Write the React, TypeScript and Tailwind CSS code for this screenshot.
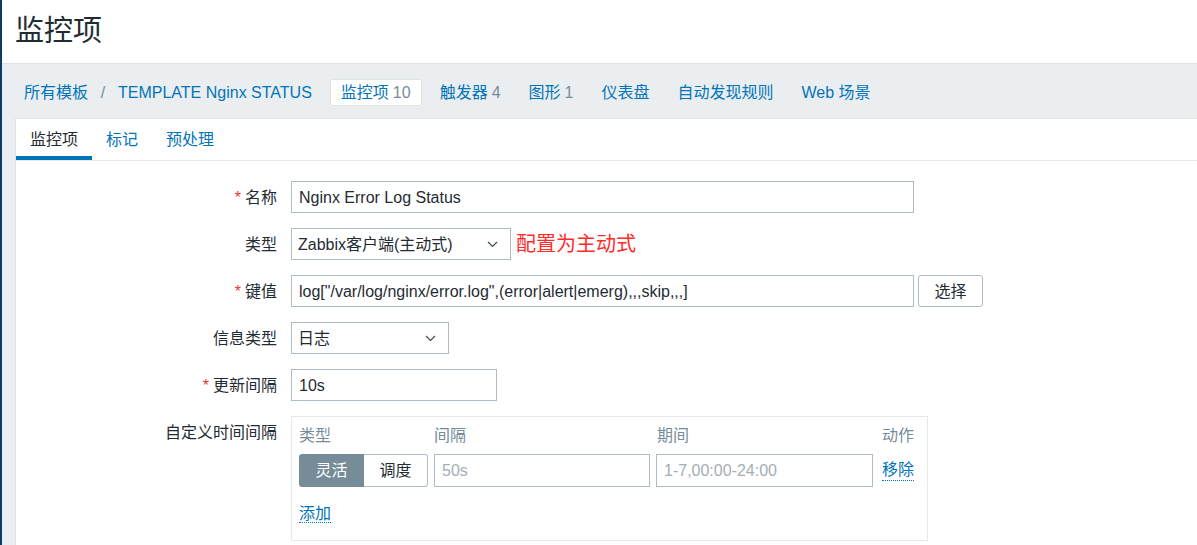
import React from 'react';

const Chevron = () => (
  <svg width="11" height="7" viewBox="0 0 11 7" className="shrink-0">
    <polyline points="1,1 5.5,5.5 10,1" fill="none" stroke="#3d4a52" strokeWidth="1.2" />
  </svg>
);

const Label = ({ text, required }: { text: string; required?: boolean }) => (
  <div className="flex h-[32px] items-center justify-end self-start whitespace-nowrap pt-[1px]">
    {required && <span className="mr-[4px] text-[#e33734]">*</span>}
    {text}
  </div>
);

const Select = ({ value, width }: { value: string; width: string }) => (
  <div
    className={`flex h-[32px] items-center justify-between border border-[#acbbc4] bg-white pl-[6px] pr-[12px] pt-[1px] ${width}`}>
    <span className="whitespace-nowrap">{value}</span>
    <Chevron />
  </div>
);

const NavLink = ({ text, count, active }: { text: string; count?: string; active?: boolean }) => (
  <span
    className={`flex h-[27px] items-center whitespace-nowrap px-[10px] text-[#0275b8] ${
      active ? 'rounded-[2px] border border-[#dfe4e7] bg-white' : ''
    }`}>
    {text}
    {count && <span className="ml-[4px] text-[#768d99]">{count}</span>}
  </span>
);

export default function App() {
  return (
    <div className="flex min-h-[545px] w-full border-l-2 border-[#0d3e61] bg-[#ebeef0] font-['Liberation_Sans','Noto_Sans_CJK_SC',sans-serif] text-[16px] text-[#1f2c33]">
      <div className="flex min-w-0 flex-1 flex-col">
        <header className="flex h-[63px] items-center bg-white px-[13px]">
          <h1 className="text-[29px] leading-none">监控项</h1>
        </header>

        <nav className="flex h-[55px] items-center gap-[8px] border-t border-[#dfe4e7] pl-[12px] pt-[3px]">
          <div className="flex items-center">
            <NavLink text="所有模板" />
            <span className="w-[10px] text-center text-[#768d99]">/</span>
            <NavLink text="TEMPLATE Nginx STATUS" />
          </div>
          <NavLink text="监控项" count="10" active />
          <NavLink text="触发器" count="4" />
          <NavLink text="图形" count="1" />
          <NavLink text="仪表盘" />
          <NavLink text="自动发现规则" />
          <NavLink text="Web 场景" />
        </nav>

        <main className="ml-[13px] flex-1 border-l border-t border-[#dfe4e7] bg-white">
          <div className="flex h-[42px] items-stretch border-b border-[#e4e8eb]">
            <span className="flex items-center border-b-[4px] border-[#0275b8] px-[14px] pt-[5px]">监控项</span>
            <span className="flex items-center border-b-[4px] border-transparent px-[14px] pt-[5px] text-[#0275b8]">标记</span>
            <span className="flex items-center border-b-[4px] border-transparent px-[14px] pt-[5px] text-[#0275b8]">预处理</span>
          </div>

          <div className="grid grid-cols-[261px_auto] gap-x-[14px] gap-y-[15px] pb-[6px] pt-[20px]">
            <Label text="名称" required />
            <div className="flex h-[32px] w-[623px] items-center border border-[#acbbc4] px-[7px] pt-[1px]">
              Nginx Error Log Status
            </div>

            <Label text="类型" />
            <div className="flex items-center">
              <Select value="Zabbix客户端(主动式)" width="w-[220px]" />
              <span className="ml-[5px] text-[20px] text-[#ff2b2b]">配置为主动式</span>
            </div>

            <Label text="键值" required />
            <div className="flex items-center">
              <div className="flex h-[32px] w-[623px] items-center whitespace-nowrap border border-[#acbbc4] px-[7px] pt-[1px]">
                log["/var/log/nginx/error.log",(error|alert|emerg),,,skip,,,]
              </div>
              <button className="ml-[4px] h-[32px] w-[65px] rounded-[3px] border border-[#acbbc4] bg-white pt-[1px]">
                选择
              </button>
            </div>

            <Label text="信息类型" />
            <Select value="日志" width="w-[158px]" />

            <Label text="更新间隔" required />
            <div className="flex h-[32px] w-[206px] items-center border border-[#acbbc4] px-[7px] pt-[1px]">10s</div>

            <div className="flex h-[34px] items-center justify-end self-start">自定义时间间隔</div>
            <div className="w-[637px] border border-[#e6e9eb] pb-[14px] pl-[7px] pr-[13px] pt-[9px]">
              <div className="grid grid-cols-[129px_217px_217px_1fr] gap-x-[6px] text-[#768d99]">
                <span className="leading-[20px]">类型</span>
                <span className="leading-[20px]">间隔</span>
                <span className="leading-[20px]">期间</span>
                <span className="text-right leading-[20px]">动作</span>
              </div>
              <div className="mt-[8px] grid grid-cols-[129px_216px_217px_1fr] items-center gap-x-[6px]">
                <div className="flex h-[33px]">
                  <span className="flex w-[65px] items-center justify-center rounded-l-[3px] bg-[#768d99] text-white">
                    灵活
                  </span>
                  <span className="flex flex-1 items-center justify-center rounded-r-[3px] border border-l-0 border-[#acbbc4]">
                    调度
                  </span>
                </div>
                <div className="flex h-[33px] items-center border border-[#acbbc4] px-[7px] text-[#a3aeb5]">50s</div>
                <div className="flex h-[33px] items-center border border-[#acbbc4] px-[7px] text-[#a3aeb5]">
                  1-7,00:00-24:00
                </div>
                <div className="flex justify-end">
                  <span className="border-b border-dotted border-[#0275b8] leading-[20px] text-[#0275b8]">移除</span>
                </div>
              </div>
              <div className="mt-[15px]">
                <span className="border-b border-dotted border-[#0275b8] leading-[20px] text-[#0275b8]">添加</span>
              </div>
            </div>
          </div>
        </main>
      </div>
    </div>
  );
}
